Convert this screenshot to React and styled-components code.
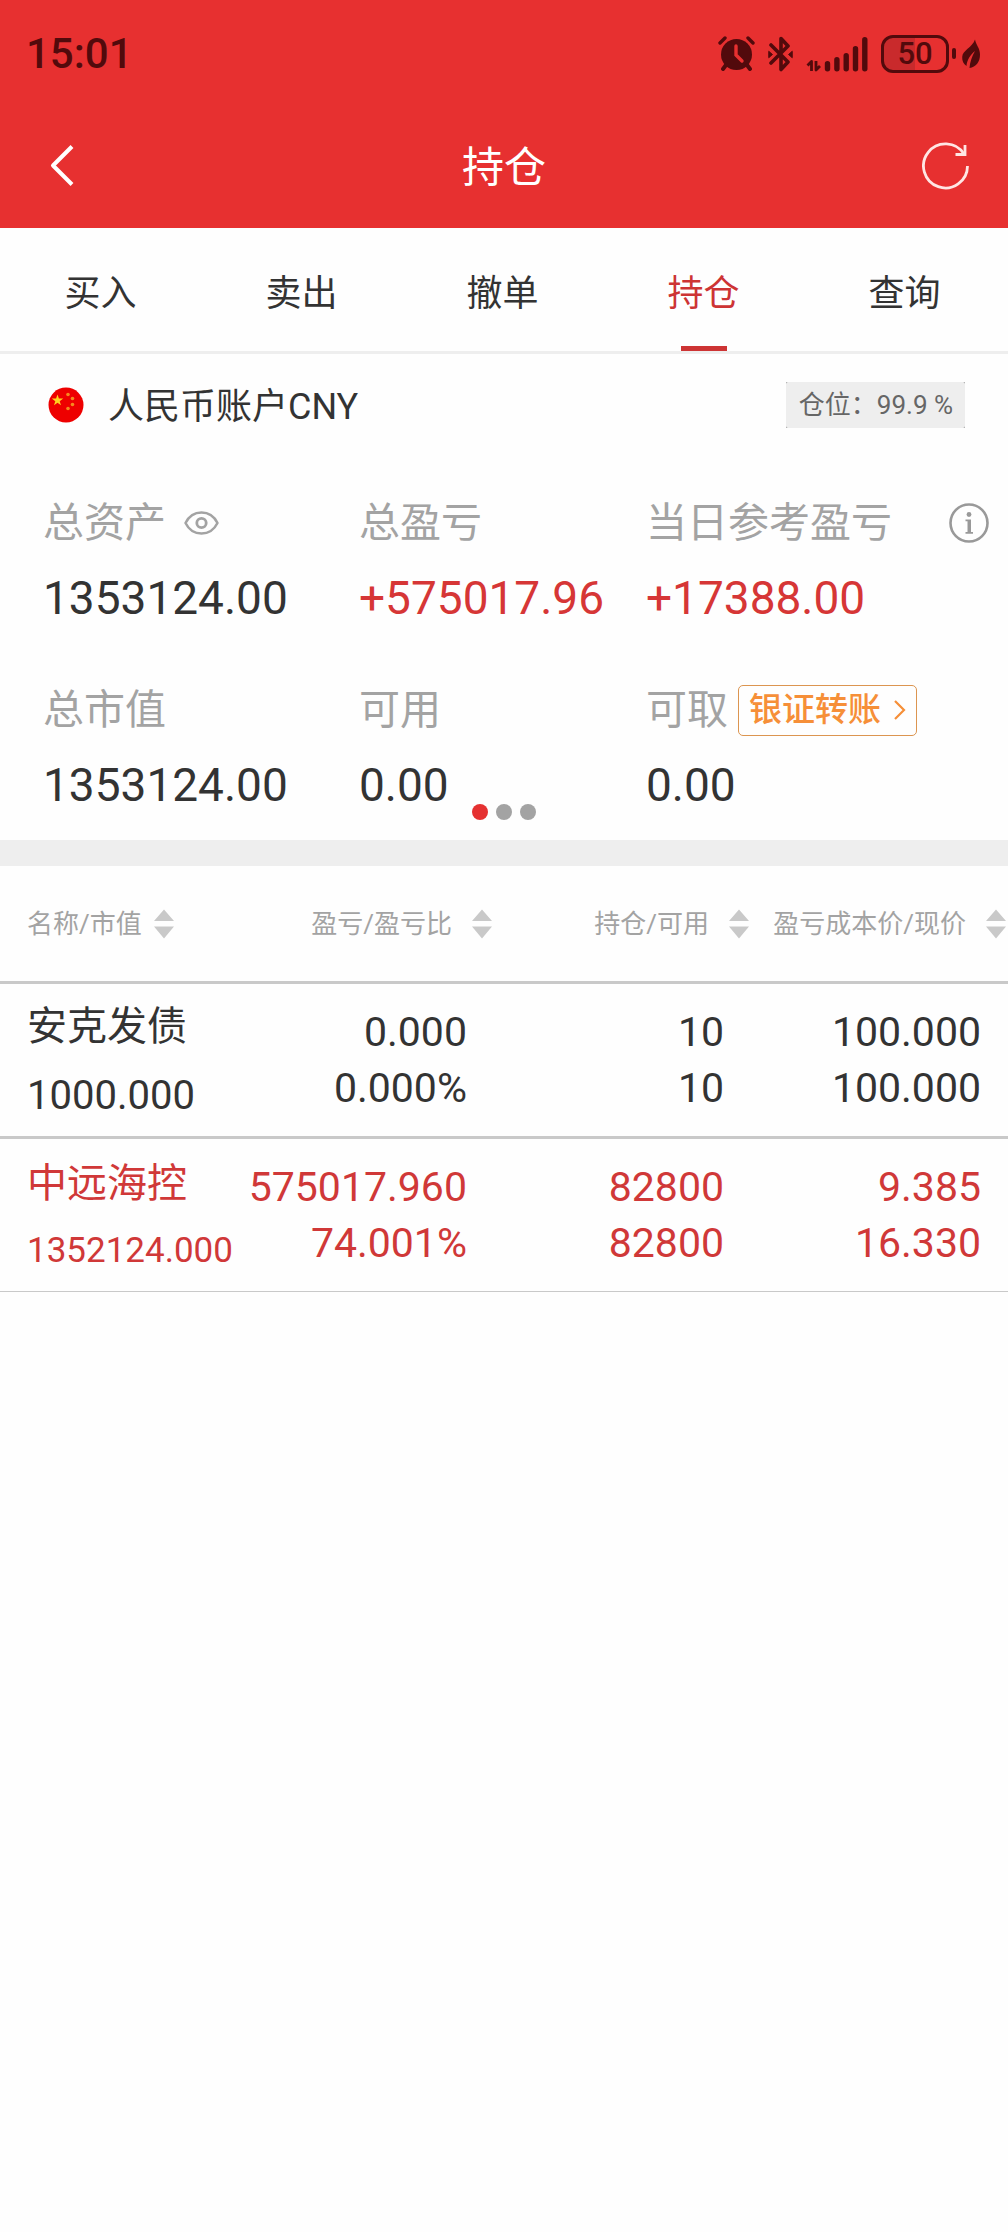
//This code defines the holdings (持仓) page of a stock trading app: a header, tabs, the account summary and the table of positions.

import React, { useState } from 'react';
import styled, { createGlobalStyle } from 'styled-components'


const GlobalStyle = createGlobalStyle`
  * {
    box-sizing: border-box;
  }

  body {
    margin: 0;
    background: #fefefe;
    color: #333;
    font-family: Roboto, 'Noto Sans CJK SC', sans-serif;
  }

  button {
    padding: 0;
    border: 0;
    background: none;
    color: inherit;
    font: inherit;
    cursor: pointer;
  }

  svg {
    display: block;
    flex: none;
  }
`

const Page = styled.div`
  min-height: 100vh;
`

const Header = styled.header`
  background: #e73030;
  color: white;
`

const StatusBar = styled.div`
  display: flex;
  align-items: center;
  justify-content: space-between;
  height: 104px;
  padding: 3px 28px 0 26px;
  color: #520a0c;
`

const Time = styled.span`
  font-size: 42px;
  line-height: 48px;
  font-weight: 500;
`

const StatusIcons = styled.div`
  display: flex;
  align-items: center;
  gap: 13px;
`

const Power = styled.div`
  display: flex;
  align-items: center;
  gap: 3px;
`

const Battery = styled.div`
  display: flex;
  align-items: center;
  justify-content: center;
  width: 68px;
  height: 38px;
  border: 3px solid #520a0c;
  border-radius: 12px;
  background: linear-gradient(to right, #c92a2c 50%, transparent 50%);
  font-size: 31px;
  line-height: 32px;
  font-weight: 500;
`

const BatteryTip = styled.span`
  width: 4px;
  height: 11px;
  margin-right: 3px;
  border-radius: 2px;
  background: #520a0c;
`

const TitleBar = styled.div`
  display: grid;
  grid-template-columns: 80px 1fr 80px;
  align-items: center;
  height: 124px;
  padding: 0 38px;
`

const Title = styled.h1`
  margin: 0;
  padding-top: 4px;
  text-align: center;
  font-size: 42px;
  line-height: 56px;
  font-weight: 400;
`

const IconButton = styled.button`
  display: flex;
  align-items: center;
  justify-content: ${props => (props.$end ? 'flex-end' : 'flex-start')};
  height: 80px;
  padding-left: 12px;
`

const Tabs = styled.nav`
  display: flex;
  padding-right: 3px;
  border-bottom: 3px solid #eee;
`

const Tab = styled.button`
  position: relative;
  flex: 1;
  height: 123px;
  color: ${props => (props.$active ? '#cd3434' : '#333')};
  font-size: 36px;

  &::after {
    content: '';
    position: absolute;
    bottom: 0;
    left: calc(50% - 23px);
    width: 46px;
    height: 5px;
    background: ${props => (props.$active ? '#cd3434' : 'transparent')};
  }
`

const Account = styled.div`
  display: flex;
  align-items: center;
  height: 102px;
  padding: 0 43px 0 48px;
`

const AccountName = styled.span`
  flex: 1;
  padding: 4px 0 0 24px;
  font-size: 36px;
  line-height: 48px;
`

// the dark ground shows only at the four rounded corners
const Ratio = styled.div`
  background: #999;
`

const RatioText = styled.span`
  display: block;
  padding: 0 12px 0 13px;
  border-radius: 2px;
  background: #eee;
  color: #666;
  font-size: 26px;
  line-height: 46px;
  white-space: pre;
`

const Summary = styled.section`
  position: relative;
  padding: 36px 0 25px 43px;
  border-bottom: 26px solid #eee;
`

const Stats = styled.dl`
  display: grid;
  grid-template-columns: 316fr 287fr 362fr;
  row-gap: 51px;
  margin: 0;
`

const Label = styled.dt`
  display: flex;
  align-items: center;
  gap: ${props => props.$gap || '0'};
  height: 60px;
  margin-bottom: 16px;
  padding: 2px 19px 0 0;
  color: #a3a3a3;
  font-size: 41px;
  line-height: 60px;
  white-space: nowrap;
`

const Value = styled.dd`
  margin: 0;
  color: ${props => (props.$up ? '#d63636' : '#333')};
  font-size: 46px;
  line-height: 60px;
`

const InfoButton = styled.button`
  margin-left: auto;
`

const Transfer = styled.button`
  display: flex;
  align-items: center;
  gap: 13px;
  height: 51px;
  padding: 0 10px;
  border: 1px solid #dc9550;
  border-radius: 5px;
  color: #f68f38;
  font-size: 33px;
  line-height: 48px;
  font-weight: 500;
`

const Dots = styled.div`
  position: absolute;
  right: 0;
  bottom: 20px;
  left: 0;
  display: flex;
  justify-content: center;
  gap: 8px;
`

const Dot = styled.span`
  width: 16px;
  height: 16px;
  border-radius: 50%;
  background: ${props => (props.$active ? '#e53131' : '#a3a3a3')};
`

const Table = styled.table`
  width: 100%;
  table-layout: fixed;
  border-spacing: 0;
`

const HeadCell = styled.th`
  width: ${props => (props.$first ? 'auto' : '25.5%')};
  height: 118px;
  padding: ${props => (props.$first ? '0 0 0 27px' : '0 2px 0 0')};
  border-bottom: 3px solid #c9c9c9;
  font-weight: 400;
`

const Sort = styled.button`
  display: flex;
  align-items: center;
  justify-content: ${props => (props.$first ? 'flex-start' : 'flex-end')};
  gap: ${props => (props.$first ? '12px' : '20px')};
  width: 100%;
  color: #a3a3a3;
  font-size: 26px;
  line-height: 40px;
  white-space: nowrap;
`

const Row = styled.tr`
  color: ${props => (props.$up ? '#d03838' : '#333')};

  td {
    box-sizing: content-box;
    border-bottom: 3px solid #c9c9c9;
  }

  &:last-child td {
    border-bottom-width: 1px;
  }
`

const NameCell = styled.td`
  height: 152px;
  padding: 0 0 0 27px;
  white-space: nowrap;
`

const Name = styled.div`
  margin-bottom: 10px;
  padding-top: 2px;
  font-size: 40px;
  line-height: 60px;
`

const Market = styled.div`
  font-size: ${props => (props.$small ? '35px' : '40px')};
  line-height: ${props => (props.$small ? '54px' : '58px')};
`

const NumberCell = styled.td`
  padding: 0 27px 0 0;
  text-align: right;
  font-size: 41px;
  line-height: 56px;
`


const tabs = ['买入', '卖出', '撤单', '持仓', '查询']

const columns = ['名称/市值', '盈亏/盈亏比', '持仓/可用', '盈亏成本价/现价']

const positions = [
  {
    name: '安克发债',
    market: '1000.000',
    cells: [['0.000', '0.000%'], ['10', '10'], ['100.000', '100.000']],
  },
  {
    name: '中远海控',
    market: '1352124.000',
    up: true,
    cells: [['575017.960', '74.001%'], ['82800', '82800'], ['9.385', '16.330']],
  },
]


const AlarmIcon = () => (
  <svg width="37" height="35" viewBox="0 0 37 35" stroke="currentColor" strokeLinecap="round" fill="none">
    <circle cx="18.5" cy="18.5" r="15.5" fill="currentColor" stroke="none" />
    <path d="M2 7l5-5M35 7l-5-5" strokeWidth="3.4" />
    <path d="M8 29l-3 4M29 29l3 4" strokeWidth="4" />
    <path d="M18 10v9l6 6" stroke="#e73030" strokeWidth="3.4" />
  </svg>
)

const BluetoothIcon = () => (
  <svg width="25" height="36" viewBox="0 0 25 36" fill="none" stroke="currentColor" strokeWidth="3.6" strokeLinejoin="round" strokeLinecap="round">
    <path d="M3 9l17 17-7 7.500V2.500L20 10 3 27" />
    <path d="M1 15.500l3.500 3L1 21.500zM24 15.500l-3.500 3L24 21.500z" fill="currentColor" strokeWidth="1" />
  </svg>
)

const SignalIcon = () => (
  <svg width="62" height="36" viewBox="0 0 62 36" fill="none" stroke="currentColor" strokeWidth="5.400" strokeLinecap="round">
    <path d="M21.500 27.700v5M30.900 23.700v9M40.200 19.700v13M49.500 12.700v20M58.800 3.700v29" />
    <path d="M5.500 35V25.500L1.500 29.500M10 25v9L14 30" strokeWidth="2.800" strokeLinecap="butt" strokeLinejoin="round" />
  </svg>
)

const LeafIcon = () => (
  <svg width="18" height="30" viewBox="0 0 18 30">
    <path d="M13 .5C14 6 18 9 18 15.500c0 7.500-4 12.500-10.500 13.500C8 23 10 17 13 12 8 16 5 21 4.500 27 1.500 25 0 22 .2 18 .5 11 10 9 13 .5z" fill="currentColor" />
  </svg>
)

const BackIcon = () => (
  <svg width="24" height="42" viewBox="0 0 24 42" fill="none" stroke="white" strokeWidth="4" strokeLinejoin="round">
    <path d="M22 1.500L3 20.500l19 19" />
  </svg>
)

const RefreshIcon = () => (
  <svg width="48" height="48" viewBox="0 0 48 48" fill="none" stroke="#ffe6e4" strokeWidth="2.800">
    <path d="M45.500 24A22 22 0 1 1 42 12" />
    <path d="M43 3v9.500H33.500" />
  </svg>
)

const EyeIcon = () => (
  <svg width="35" height="24" viewBox="0 0 35 24" fill="none" stroke="#a3a3a3" strokeWidth="2.500">
    <path d="M1.500 12C5 5 11 1.500 17.500 1.500S30 5 33.500 12C30 19 24 22.500 17.500 22.500S5 19 1.500 12z" strokeLinejoin="round" />
    <circle cx="17.500" cy="12" r="4.700" strokeWidth="2.800" />
  </svg>
)

const InfoIcon = () => (
  <svg width="40" height="40" viewBox="0 0 40 40">
    <circle cx="20" cy="20" r="18.500" fill="none" stroke="#999" strokeWidth="2.600" />
    <circle cx="20" cy="11.500" r="2.400" fill="#999" />
    <path d="M16.500 16.500h5.500v12.500h2v1.800h-7.500v-1.800h2V18.300h-2z" fill="#999" />
  </svg>
)

const ChevronIcon = () => (
  <svg width="12" height="20" viewBox="0 0 12 20" fill="none" stroke="currentColor" strokeWidth="2.200">
    <path d="M1 1l9 9-9 9" />
  </svg>
)

const SortIcon = () => (
  <svg width="20" height="30" viewBox="0 0 20 30" fill="#c9c9c9">
    <path d="M10 .5l10 11.500H0zM0 17.500h20L10 29.500z" />
  </svg>
)

const FlagIcon = () => (
  <svg width="36" height="36" viewBox="0 0 36 36">
    <circle cx="18" cy="18" r="17.500" fill="#ee0000" />
    <path d="M9.500 7.500l1.400 4.100h4.300l-3.500 2.600 1.300 4.100-3.500-2.500L6 18.300l1.300-4.100-3.500-2.600h4.300z" fill="#ffd21f" />
    <g fill="#f58a1f">
      <circle cx="20" cy="7.500" r="1.800" />
      <circle cx="24.500" cy="11.500" r="1.800" />
      <circle cx="24.500" cy="17.500" r="1.800" />
      <circle cx="20" cy="21.500" r="1.800" />
    </g>
  </svg>
)


const App = () => {
  const [tab, setTab] = useState('持仓');

  return (
    <Page>
      <GlobalStyle />

      <Header>
        <StatusBar>
          <Time>15:01</Time>
          <StatusIcons>
            <AlarmIcon />
            <BluetoothIcon />
            <SignalIcon />
            <Power>
              <Battery>50</Battery>
              <BatteryTip />
              <LeafIcon />
            </Power>
          </StatusIcons>
        </StatusBar>

        <TitleBar>
          <IconButton aria-label="返回"><BackIcon /></IconButton>
          <Title>持仓</Title>
          <IconButton aria-label="刷新" $end><RefreshIcon /></IconButton>
        </TitleBar>
      </Header>

      <Tabs>
        {tabs.map(name => (
          <Tab key={name} $active={name === tab} onClick={() => setTab(name)}>{name}</Tab>
        ))}
      </Tabs>

      <Account>
        <FlagIcon />
        <AccountName>人民币账户CNY</AccountName>
        <Ratio><RatioText>仓位：99.9 %</RatioText></Ratio>
      </Account>

      <Summary>
        <Stats>
          <div>
            <Label $gap="18px">
              总资产
              <button aria-label="隐藏金额"><EyeIcon /></button>
            </Label>
            <Value>1353124.00</Value>
          </div>
          <div>
            <Label>总盈亏</Label>
            <Value $up>+575017.96</Value>
          </div>
          <div>
            <Label>
              当日参考盈亏
              <InfoButton aria-label="说明"><InfoIcon /></InfoButton>
            </Label>
            <Value $up>+17388.00</Value>
          </div>
          <div>
            <Label>总市值</Label>
            <Value>1353124.00</Value>
          </div>
          <div>
            <Label>可用</Label>
            <Value>0.00</Value>
          </div>
          <div>
            <Label $gap="10px">
              可取
              <Transfer>银证转账 <ChevronIcon /></Transfer>
            </Label>
            <Value>0.00</Value>
          </div>
        </Stats>

        <Dots>
          <Dot $active />
          <Dot />
          <Dot />
        </Dots>
      </Summary>

      <Table>
        <thead>
          <tr>
            {columns.map((name, i) => (
              <HeadCell key={name} $first={i === 0}>
                <Sort $first={i === 0}>{name}<SortIcon /></Sort>
              </HeadCell>
            ))}
          </tr>
        </thead>
        <tbody>
          {positions.map(item => (
            <Row key={item.name} $up={item.up}>
              <NameCell>
                <Name>{item.name}</Name>
                {/* long amounts get the smaller size */}
                <Market $small={item.market.length > 9}>{item.market}</Market>
              </NameCell>
              {item.cells.map(([top, bottom], i) => (
                <NumberCell key={i}>
                  <div>{top}</div>
                  <div>{bottom}</div>
                </NumberCell>
              ))}
            </Row>
          ))}
        </tbody>
      </Table>
    </Page>
  );
}

export default App
